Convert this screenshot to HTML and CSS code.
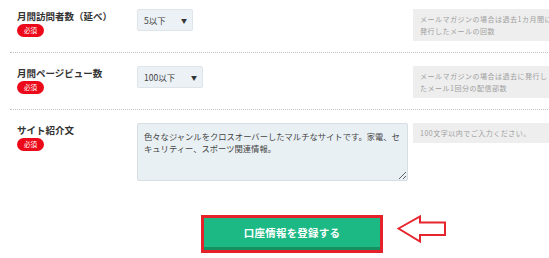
FILE: index.html
```html
<!DOCTYPE html>
<html lang="ja">
<head>
<meta charset="utf-8">
<title>口座情報</title>
<link rel="stylesheet" href="styles.css">
</head>
<body>
<div class="page">
  <div class="form">
    <div class="row row-first">
      <div class="label-col">
        <div class="label">月間訪問者数（延べ）</div>
        <span class="badge">必須</span>
      </div>
      <div class="control-col">
        <div class="select select-sm"><span>5以下</span><span class="caret">▼</span></div>
      </div>
      <div class="help">メールマガジンの場合は過去1カ月間に発行したメールの回数</div>
    </div>
    <div class="row">
      <div class="label-col">
        <div class="label">月間ページビュー数</div>
        <span class="badge">必須</span>
      </div>
      <div class="control-col">
        <div class="select select-md"><span>100以下</span><span class="caret">▼</span></div>
      </div>
      <div class="help">メールマガジンの場合は過去に発行したメール1回分の配信部数</div>
    </div>
    <div class="row row-last">
      <div class="label-col">
        <div class="label">サイト紹介文</div>
        <span class="badge">必須</span>
      </div>
      <div class="control-col">
        <textarea class="textarea">色々なジャンルをクロスオーバーしたマルチなサイトです。家電、セキュリティー、スポーツ関連情報。</textarea>
      </div>
      <div class="help">100文字以内でご入力ください。</div>
    </div>
  </div>
  <div class="submit-row">
    <div class="submit-frame">
      <button class="submit" type="button">口座情報を登録する</button>
    </div>
    <svg class="arrow" width="50" height="30" viewBox="0 0 50 30" aria-hidden="true">
      <polygon points="1.5,13.5 23,1.5 23,7.5 48,7.5 48,20 23,20 23,26.5" fill="#ffffff" stroke="#e5262e" stroke-width="2" stroke-linejoin="miter"/>
    </svg>
  </div>
</div>
</body>
</html>
```

FILE: styles.css
```css
html, body {
  margin: 0;
  padding: 0;
  background: #ffffff;
}

body {
  font-family: "Noto Sans CJK JP", "Noto Sans", sans-serif;
  color: #333333;
  width: 549px;
  height: 258px;
  overflow: hidden;
}

.page {
  width: 549px;
  overflow: hidden;
}

.form {
  margin-left: 10px;
  width: 560px;
}

.row {
  display: flex;
  align-items: flex-start;
  padding: 13px 0 11px 7px;
  border-bottom: 1px dotted #c4c4c4;
}

.row-first {
  padding-top: 9px;
}

.row-last {
  border-bottom: none;
  padding-bottom: 0;
}

.label-col {
  width: 120px;
  flex: none;
  display: flex;
  flex-direction: column;
  align-items: flex-start;
}

.label {
  font-size: 9.5px;
  font-weight: bold;
  line-height: 14px;
  color: #333333;
  white-space: nowrap;
}

.badge {
  margin-top: 1px;
  width: 27px;
  height: 13px;
  border-radius: 6.5px;
  background: #ec0a1a;
  color: #ffffff;
  font-size: 6.5px;
  line-height: 13px;
  text-align: center;
}

.control-col {
  width: 276px;
  flex: none;
}

.select {
  box-sizing: border-box;
  height: 22px;
  display: flex;
  align-items: center;
  justify-content: space-between;
  padding: 0 5px 0 6px;
  background: #ebf1f5;
  border: 1px solid #dde4ea;
  border-radius: 2px;
  font-size: 8.5px;
  color: #444444;
}

.select-sm {
  width: 56px;
}

.select-md {
  width: 66px;
}

.caret {
  font-size: 6px;
  color: #333333;
}

.textarea {
  display: block;
  box-sizing: border-box;
  width: 271px;
  height: 58px;
  margin: 0;
  padding: 6px 4px 6px 6px;
  background: #e9f0f4;
  border: 1px solid #d6dde3;
  border-radius: 2px;
  font-family: "Noto Sans CJK JP", "Noto Sans", sans-serif;
  font-size: 8.3px;
  line-height: 12px;
  color: #444444;
  overflow: hidden;
}

.help {
  flex: none;
  box-sizing: border-box;
  width: 147px;
  padding: 4px 7px;
  background: #eeeeee;
  color: #a0a0a0;
  font-size: 7px;
  letter-spacing: 0.5px;
  line-height: 12px;
}

.submit-row {
  display: flex;
  align-items: flex-start;
  gap: 14px;
  margin-top: 34px;
  padding-left: 201px;
}

.submit-frame {
  border: 3px solid #e5212b;
  width: 176px;
}

.submit {
  display: block;
  width: 100%;
  height: 32px;
  margin: 0;
  padding: 0;
  border: none;
  border-bottom: 3px solid #15905f;
  background: #1db985;
  color: #ffffff;
  font-family: "Noto Sans CJK JP", "Noto Sans", sans-serif;
  font-size: 10.5px;
  font-weight: bold;
  letter-spacing: 0.2px;
}

.arrow {
  display: block;
  flex: none;
  margin-top: 0;
}
```
